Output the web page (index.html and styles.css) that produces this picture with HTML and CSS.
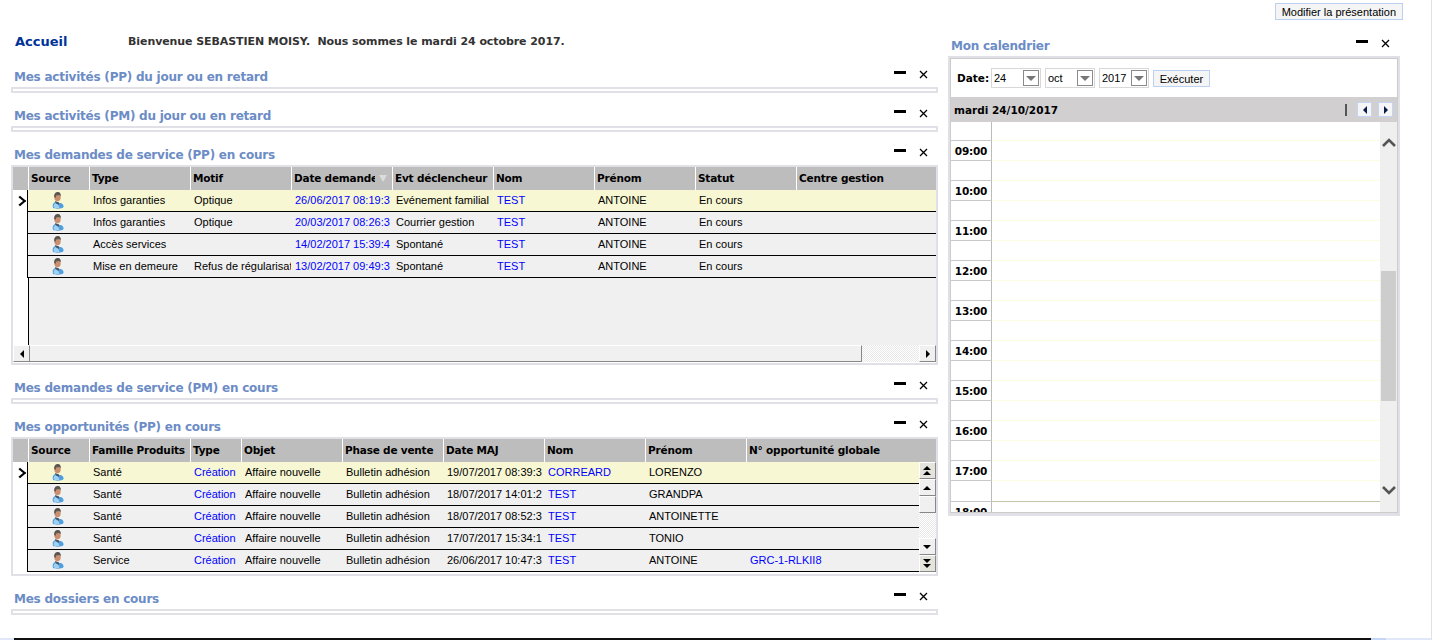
FILE: index.html
```html
<!DOCTYPE html>
<html lang="fr">

<head>
    <meta charset="UTF-8">
    <title>Accueil</title>
    <link rel="stylesheet" href="styles.css">
</head>

<body>
    <svg class="defs" width="0" height="0">
        <symbol id="person" viewBox="0 0 12 17">
            <path d="M1 16C0 13 1 11 3 10l5 1c2 0 4 2 3.500 4C11 17 3 17 1 16z" fill="#4d9fe0" />
            <path d="M1.500 15c0-2 .5-3 2-4l3 2 1 3H3z" fill="#9fd0f2" />
            <ellipse cx="5.500" cy="5" rx="3.200" ry="4.300" fill="#c98f6e" />
            <path d="M2.200 5C2 1 4 0 6 0s3 2 2.800 4L7 3l-3 .5L3.500 6z" fill="#5a5650" />
            <path d="M3 9l4 1.500V13l-3.500-2z" fill="#4a5560" />
        </symbol>
        <symbol id="close" viewBox="0 0 9 9">
            <path d="M1 1l7 7M8 1L1 8" stroke="#000" stroke-width="1.3" fill="none" />
        </symbol>
    </svg>

    <div class="page">
        <div class="topbar">
            <button class="btn">Modifier la présentation</button>
        </div>

        <div class="columns">
            <div class="main">
                <div class="welcome">
                    <span class="page-title">Accueil</span>
                    <span class="welcome-text">Bienvenue SEBASTIEN MOISY.&nbsp; Nous sommes le mardi 24 octobre 2017.</span>
                </div>

                <div class="portlet">
                    <div class="portlet-head">
                        <span class="portlet-title">Mes activités (PP) du jour ou en retard</span>
                        <span class="tool-min"></span>
                        <svg class="tool-close"><use href="#close" /></svg>
                    </div>
                    <div class="frame frame-empty"></div>
                </div>

                <div class="portlet">
                    <div class="portlet-head">
                        <span class="portlet-title">Mes activités (PM) du jour ou en retard</span>
                        <span class="tool-min"></span>
                        <svg class="tool-close"><use href="#close" /></svg>
                    </div>
                    <div class="frame frame-empty"></div>
                </div>

                <div class="portlet">
                    <div class="portlet-head">
                        <span class="portlet-title">Mes demandes de service (PP) en cours</span>
                        <span class="tool-min"></span>
                        <svg class="tool-close"><use href="#close" /></svg>
                    </div>
                    <div class="frame frame-grid frame-service">
                        <table class="grid">
                            <colgroup>
                                <col class="col-mark">
                                <col class="col-source">
                                <col class="col-std">
                                <col class="col-std">
                                <col class="col-std">
                                <col class="col-std">
                                <col class="col-std">
                                <col class="col-std">
                                <col class="col-std">
                                <col>
                            </colgroup>
                            <tr>
                                <th class="mark"></th>
                                <th>Source</th>
                                <th>Type</th>
                                <th>Motif</th>
                                <th class="sorted"><span class="sorted-text">Date demande</span><span class="sort-arrow"></span></th>
                                <th>Evt déclencheur</th>
                                <th>Nom</th>
                                <th>Prénom</th>
                                <th>Statut</th>
                                <th>Centre gestion</th>
                            </tr>
                            <tr class="selected">
                                <td class="mark"><span class="row-arrow"></span></td>
                                <td class="source"><svg class="person"><use href="#person" /></svg></td>
                                <td>Infos garanties</td>
                                <td>Optique</td>
                                <td class="link">26/06/2017 08:19:3</td>
                                <td>Evénement familial</td>
                                <td class="link">TEST</td>
                                <td>ANTOINE</td>
                                <td>En cours</td>
                                <td></td>
                            </tr>
                            <tr>
                                <td class="mark"></td>
                                <td class="source"><svg class="person"><use href="#person" /></svg></td>
                                <td>Infos garanties</td>
                                <td>Optique</td>
                                <td class="link">20/03/2017 08:26:3</td>
                                <td>Courrier gestion</td>
                                <td class="link">TEST</td>
                                <td>ANTOINE</td>
                                <td>En cours</td>
                                <td></td>
                            </tr>
                            <tr>
                                <td class="mark"></td>
                                <td class="source"><svg class="person"><use href="#person" /></svg></td>
                                <td>Accès services</td>
                                <td></td>
                                <td class="link">14/02/2017 15:39:4</td>
                                <td>Spontané</td>
                                <td class="link">TEST</td>
                                <td>ANTOINE</td>
                                <td>En cours</td>
                                <td></td>
                            </tr>
                            <tr>
                                <td class="mark"></td>
                                <td class="source"><svg class="person"><use href="#person" /></svg></td>
                                <td>Mise en demeure</td>
                                <td>Refus de régularisat</td>
                                <td class="link">13/02/2017 09:49:3</td>
                                <td>Spontané</td>
                                <td class="link">TEST</td>
                                <td>ANTOINE</td>
                                <td>En cours</td>
                                <td></td>
                            </tr>
                        </table>
                        <div class="grid-filler"></div>
                        <div class="hscroll">
                            <span class="sb-btn"><span class="arrow arrow-left"></span></span>
                            <span class="hscroll-thumb"></span>
                            <span class="dither"></span>
                            <span class="sb-btn"><span class="arrow arrow-right"></span></span>
                        </div>
                    </div>
                </div>

                <div class="portlet">
                    <div class="portlet-head">
                        <span class="portlet-title">Mes demandes de service (PM) en cours</span>
                        <span class="tool-min"></span>
                        <svg class="tool-close"><use href="#close" /></svg>
                    </div>
                    <div class="frame frame-empty"></div>
                </div>

                <div class="portlet">
                    <div class="portlet-head">
                        <span class="portlet-title">Mes opportunités (PP) en cours</span>
                        <span class="tool-min"></span>
                        <svg class="tool-close"><use href="#close" /></svg>
                    </div>
                    <div class="frame frame-grid frame-opp">
                        <table class="grid">
                            <colgroup>
                                <col class="col-mark">
                                <col class="col-source">
                                <col class="col-std">
                                <col class="col-small">
                                <col class="col-std">
                                <col class="col-std">
                                <col class="col-std">
                                <col class="col-std">
                                <col class="col-std">
                                <col>
                                <col class="col-vscroll">
                            </colgroup>
                            <tr>
                                <th class="mark"></th>
                                <th>Source</th>
                                <th>Famille Produits</th>
                                <th>Type</th>
                                <th>Objet</th>
                                <th>Phase de vente</th>
                                <th>Date MAJ</th>
                                <th>Nom</th>
                                <th>Prénom</th>
                                <th colspan="2">N° opportunité globale</th>
                            </tr>
                            <tr class="selected">
                                <td class="mark"><span class="row-arrow"></span></td>
                                <td class="source"><svg class="person"><use href="#person" /></svg></td>
                                <td>Santé</td>
                                <td class="link">Création</td>
                                <td>Affaire nouvelle</td>
                                <td>Bulletin adhésion</td>
                                <td>19/07/2017 08:39:3</td>
                                <td class="link">CORREARD</td>
                                <td>LORENZO</td>
                                <td></td>
                                <td class="vscroll-cell" rowspan="5">
                                    <div class="vscroll">
                                        <span class="sb-btn sb-double"><span class="arrow arrow-first"></span></span>
                                        <span class="sb-btn"><span class="arrow arrow-up"></span></span>
                                        <span class="sb-btn"></span>
                                        <span class="dither"></span>
                                        <span class="sb-btn"><span class="arrow arrow-down"></span></span>
                                        <span class="sb-btn sb-double"><span class="arrow arrow-last"></span></span>
                                    </div>
                                </td>
                            </tr>
                            <tr>
                                <td class="mark"></td>
                                <td class="source"><svg class="person"><use href="#person" /></svg></td>
                                <td>Santé</td>
                                <td class="link">Création</td>
                                <td>Affaire nouvelle</td>
                                <td>Bulletin adhésion</td>
                                <td>18/07/2017 14:01:2</td>
                                <td class="link">TEST</td>
                                <td>GRANDPA</td>
                                <td></td>
                            </tr>
                            <tr>
                                <td class="mark"></td>
                                <td class="source"><svg class="person"><use href="#person" /></svg></td>
                                <td>Santé</td>
                                <td class="link">Création</td>
                                <td>Affaire nouvelle</td>
                                <td>Bulletin adhésion</td>
                                <td>18/07/2017 08:52:3</td>
                                <td class="link">TEST</td>
                                <td>ANTOINETTE</td>
                                <td></td>
                            </tr>
                            <tr>
                                <td class="mark"></td>
                                <td class="source"><svg class="person"><use href="#person" /></svg></td>
                                <td>Santé</td>
                                <td class="link">Création</td>
                                <td>Affaire nouvelle</td>
                                <td>Bulletin adhésion</td>
                                <td>17/07/2017 15:34:1</td>
                                <td class="link">TEST</td>
                                <td>TONIO</td>
                                <td></td>
                            </tr>
                            <tr>
                                <td class="mark"></td>
                                <td class="source"><svg class="person"><use href="#person" /></svg></td>
                                <td>Service</td>
                                <td class="link">Création</td>
                                <td>Affaire nouvelle</td>
                                <td>Bulletin adhésion</td>
                                <td>26/06/2017 10:47:3</td>
                                <td class="link">TEST</td>
                                <td>ANTOINE</td>
                                <td class="link">GRC-1-RLKII8</td>
                            </tr>
                        </table>
                    </div>
                </div>

                <div class="portlet">
                    <div class="portlet-head">
                        <span class="portlet-title">Mes dossiers en cours</span>
                        <span class="tool-min"></span>
                        <svg class="tool-close"><use href="#close" /></svg>
                    </div>
                    <div class="frame frame-empty"></div>
                </div>
            </div>

            <div class="side">
                <div class="portlet-head side-head">
                    <span class="portlet-title">Mon calendrier</span>
                    <span class="tool-min"></span>
                    <svg class="tool-close"><use href="#close" /></svg>
                </div>
                <div class="cal-frame">
                    <div class="cal-inner">
                        <div class="cal-form">
                            <span class="cal-label">Date:</span>
                            <div class="combo"><span>24</span><span class="combo-btn"></span></div>
                            <div class="combo"><span>oct</span><span class="combo-btn"></span></div>
                            <div class="combo"><span>2017</span><span class="combo-btn"></span></div>
                            <button class="btn btn-run">Exécuter</button>
                        </div>
                        <div class="cal-bar">
                            <span class="cal-day">mardi 24/10/2017</span>
                            <span class="cal-sep"></span>
                            <span class="cal-nav"><span class="arrow arrow-left"></span></span>
                            <span class="cal-nav"><span class="arrow arrow-right"></span></span>
                        </div>
                        <div class="cal-body">
                            <div class="cal-slots">
                                <div class="slot slot-first"><span class="slot-time"></span><span class="slot-main"></span></div>
                                <div class="slot"><span class="slot-time">09:00</span><span class="slot-main"></span></div>
                                <div class="slot"><span class="slot-time"></span><span class="slot-main"></span></div>
                                <div class="slot"><span class="slot-time">10:00</span><span class="slot-main"></span></div>
                                <div class="slot"><span class="slot-time"></span><span class="slot-main"></span></div>
                                <div class="slot"><span class="slot-time">11:00</span><span class="slot-main"></span></div>
                                <div class="slot"><span class="slot-time"></span><span class="slot-main"></span></div>
                                <div class="slot"><span class="slot-time">12:00</span><span class="slot-main"></span></div>
                                <div class="slot"><span class="slot-time"></span><span class="slot-main"></span></div>
                                <div class="slot"><span class="slot-time">13:00</span><span class="slot-main"></span></div>
                                <div class="slot"><span class="slot-time"></span><span class="slot-main"></span></div>
                                <div class="slot"><span class="slot-time">14:00</span><span class="slot-main"></span></div>
                                <div class="slot"><span class="slot-time"></span><span class="slot-main"></span></div>
                                <div class="slot"><span class="slot-time">15:00</span><span class="slot-main"></span></div>
                                <div class="slot"><span class="slot-time"></span><span class="slot-main"></span></div>
                                <div class="slot"><span class="slot-time">16:00</span><span class="slot-main"></span></div>
                                <div class="slot"><span class="slot-time"></span><span class="slot-main"></span></div>
                                <div class="slot"><span class="slot-time">17:00</span><span class="slot-main"></span></div>
                                <div class="slot slot-end"><span class="slot-time"></span><span class="slot-main"></span></div>
                                <div class="slot"><span class="slot-time">18:00</span><span class="slot-main"></span></div>
                            </div>
                            <div class="cal-scroll">
                                <svg class="chevron chevron-up" viewBox="0 0 14 9"><path d="M1 8l6-6 6 6" /></svg>
                                <span class="cal-thumb"></span>
                                <svg class="chevron chevron-down" viewBox="0 0 14 9"><path d="M1 1l6 6 6-6" /></svg>
                            </div>
                        </div>
                    </div>
                </div>
            </div>
        </div>

        <div class="footer">
            <span class="footer-left"></span>
            <span class="footer-line"></span>
            <span class="footer-tab"></span>
            <span class="footer-right"></span>
        </div>
    </div>
</body>

</html>
```

FILE: styles.css
```css
body {
    margin: 0;
    background-color: #fff;
    font-family: "Liberation Sans", Arial, sans-serif;
    font-size: 11px;
    color: #000;
}

.defs {
    position: absolute;
}

.page {
    width: 1431px;
    height: 640px;
    border-right: 1px solid #e0e0e6;
    display: flex;
    flex-direction: column;
    overflow: hidden;
}

.topbar {
    height: 28px;
    box-sizing: border-box;
    padding: 3px 28px 0 0;
    display: flex;
    justify-content: flex-end;
    align-items: flex-start;
}

.btn {
    height: 17px;
    padding: 0 6px;
    border: 1px solid #bcd0f2;
    background-color: #f5f5f5;
    font-family: inherit;
    font-size: 11px;
    line-height: 14px;
    color: #000;
}

.columns {
    display: flex;
    flex: 1;
    padding-left: 11px;
}

.main {
    width: 927px;
}

.side {
    width: 452px;
    margin-left: 10px;
    padding-top: 6px;
}

.welcome {
    height: 26px;
    margin-bottom: 11px;
    display: flex;
    align-items: center;
    padding-left: 4px;
}

.page-title {
    width: 113px;
    font-family: "DejaVu Sans", sans-serif;
    font-size: 13px;
    font-weight: bold;
    color: #003399;
}

.welcome-text {
    font-family: "DejaVu Sans", sans-serif;
    font-size: 11px;
    font-weight: bold;
    letter-spacing: -0.08px;
    color: #333;
}

.portlet {
    margin-bottom: 11px;
}

.portlet-head {
    height: 22px;
    box-sizing: border-box;
    display: flex;
    align-items: center;
    padding: 2px 10px 0 3px;
}

.portlet-title {
    font-family: "DejaVu Sans", sans-serif;
    font-size: 12px;
    font-weight: bold;
    letter-spacing: -0.23px;
    color: #6c8cc6;
    flex: 1;
}

.tool-min {
    width: 12px;
    height: 3px;
    background-color: #000;
    margin: 0 13px 9px 0;
}

.tool-close {
    width: 9px;
    height: 9px;
    margin-top: -6px;
}

.side-head .tool-min {
    margin-bottom: 10px;
}

.frame {
    border: 2px solid #e0e0e6;
    box-sizing: border-box;
}

.frame-empty {
    height: 6px;
}

.frame-grid {
    display: flex;
    flex-direction: column;
}

.frame-service {
    height: 200px;
}

.frame-opp {
    height: 139px;
}

/* grids */
.grid {
    table-layout: fixed;
    width: 923px;
    border-collapse: separate;
    border-spacing: 0;
}

.col-mark {
    width: 15px;
}

.col-source {
    width: 61px;
}

.col-std {
    width: 101px;
}

.col-small {
    width: 51px;
}

.col-vscroll {
    width: 17px;
}

.grid th {
    height: 23px;
    box-sizing: border-box;
    padding: 0 0 2px 2px;
    border-left: 1px solid #fff;
    background-color: #bdbdbd;
    font-family: "DejaVu Sans", sans-serif;
    font-size: 10.5px;
    font-weight: bold;
    letter-spacing: -0.2px;
    text-align: left;
    white-space: nowrap;
    overflow: hidden;
}

.grid th.mark {
    border-left: none;
}

.grid th.sorted {
    position: relative;
}

.sorted-text {
    display: block;
    width: 81px;
    overflow: hidden;
}

.sort-arrow {
    position: absolute;
    right: 5px;
    top: 8px;
    width: 0;
    height: 0;
    border-left: 4px solid transparent;
    border-right: 4px solid transparent;
    border-top: 7px solid #dcdcdc;
}

.grid td {
    height: 22px;
    box-sizing: border-box;
    padding: 0 0 1px 4px;
    border-bottom: 1px solid #000;
    background-color: #f0f0f0;
    white-space: nowrap;
    overflow: hidden;
}

.grid .selected td {
    background-color: #f7f7d3;
}

.grid td.mark,
.grid .selected td.mark {
    padding: 0 0 0 4px;
    background-color: #fff;
    border-bottom: none;
    border-right: 1px solid #000;
    vertical-align: middle;
}

.grid td.link {
    color: #0000ff;
}

.grid td.source {
    padding: 0 2px 0 0;
    text-align: center;
}

.person {
    display: block;
    width: 12px;
    height: 17px;
    margin: 0 auto;
}

.row-arrow {
    display: block;
    width: 6px;
    height: 6px;
    border-top: 2px solid #000;
    border-right: 2px solid #000;
    transform: translateX(-1px) rotate(45deg) skew(-5deg, -5deg);
}

.grid-filler {
    flex: 1;
    margin-left: 15px;
    border-left: 1px solid #000;
    background-color: #f0f0f0;
}

/* scrollbars */
.hscroll {
    display: flex;
    height: 17px;
    margin-bottom: 1px;
    background-color: #fff;
}

.sb-btn {
    display: flex;
    flex: none;
    align-items: center;
    justify-content: center;
    box-sizing: border-box;
    width: 17px;
    height: 17px;
    background-color: #f0f0f0;
    border-top: 1px solid #fff;
    border-left: 1px solid #fff;
    border-right: 1px solid #888;
    border-bottom: 1px solid #888;
}

.sb-double {
    background-color: #e4e4dc;
}

.hscroll-thumb {
    width: 832px;
    background-color: #f0f0f0;
    border-right: 1px solid #888;
    border-bottom: 1px solid #888;
    border-top: 1px solid #fff;
    box-sizing: border-box;
}

.dither {
    flex: 1;
    background-image: repeating-conic-gradient(#e8e8e8 0 25%, #fff 0 50%);
    background-size: 2px 2px;
}

.grid td.vscroll-cell {
    padding: 0;
    border-bottom: none;
    background-color: #fff;
    vertical-align: top;
}

.vscroll {
    display: flex;
    flex-direction: column;
    height: 110px;
}

.arrow {
    display: block;
    width: 0;
    height: 0;
}

.arrow-left {
    border-top: 4px solid transparent;
    border-bottom: 4px solid transparent;
    border-right: 4px solid #000;
}

.arrow-right {
    border-top: 4px solid transparent;
    border-bottom: 4px solid transparent;
    border-left: 4px solid #000;
}

.arrow-up {
    border-left: 4px solid transparent;
    border-right: 4px solid transparent;
    border-bottom: 4px solid #000;
}

.arrow-down {
    border-left: 4px solid transparent;
    border-right: 4px solid transparent;
    border-top: 4px solid #000;
}

.arrow-first,
.arrow-last {
    position: relative;
    border-left: 4px solid transparent;
    border-right: 4px solid transparent;
}

.arrow-first {
    border-bottom: 4px solid #000;
    margin-top: -5px;
}

.arrow-first::after {
    content: "";
    position: absolute;
    left: -4px;
    top: 5px;
    border-left: 4px solid transparent;
    border-right: 4px solid transparent;
    border-bottom: 4px solid #000;
}

.arrow-last {
    border-top: 4px solid #000;
    margin-bottom: -5px;
}

.arrow-last::before {
    content: "";
    position: absolute;
    left: -4px;
    top: -9px;
    border-left: 4px solid transparent;
    border-right: 4px solid transparent;
    border-top: 4px solid #000;
}

/* calendar */
.cal-frame {
    height: 460px;
    box-sizing: border-box;
    border: solid #e0e0e6;
    border-width: 2px 2px 3px 2px;
}

.cal-inner {
    height: 100%;
    box-sizing: border-box;
    border: 1px solid #cccccc;
    display: flex;
    flex-direction: column;
}

.cal-form {
    height: 38px;
    flex: none;
    display: flex;
    align-items: center;
    gap: 4px;
    padding-left: 6px;
}

.cal-label {
    width: 30px;
    font-family: "DejaVu Sans", sans-serif;
    font-size: 10.5px;
    font-weight: bold;
}

.combo {
    width: 50px;
    height: 20px;
    box-sizing: border-box;
    border: 1px solid #d8d8d8;
    display: flex;
    align-items: center;
    justify-content: space-between;
    padding: 0 1px 0 2px;
}

.combo-btn {
    width: 16px;
    height: 16px;
    box-sizing: border-box;
    border: 1px solid #8a8a8a;
    display: flex;
    align-items: center;
    justify-content: center;
}

.combo-btn::after {
    content: "";
    border-left: 5px solid transparent;
    border-right: 5px solid transparent;
    border-top: 5px solid #777;
}

.btn-run {
    width: 57px;
    padding: 0;
    margin-top: 1px;
}

.cal-bar {
    height: 25px;
    flex: none;
    background-color: #d1cfd0;
    display: flex;
    align-items: center;
    padding: 0 4px 0 3px;
}

.cal-day {
    flex: 1;
    font-family: "DejaVu Sans", sans-serif;
    font-size: 10.5px;
    font-weight: bold;
}

.cal-sep {
    width: 2px;
    height: 12px;
    background-color: #555;
    margin-right: 4px;
}

.cal-nav {
    width: 15px;
    height: 15px;
    box-sizing: border-box;
    border: 1px solid #c4d4f4;
    background-color: #f5f5f5;
    display: flex;
    align-items: center;
    justify-content: center;
    margin-left: 6px;
}

.cal-nav .arrow-left {
    border-right-color: #0a1a4a;
}

.cal-nav .arrow-right {
    border-left-color: #0a1a4a;
}

.cal-body {
    flex: 1;
    min-height: 0;
    display: flex;
    overflow: hidden;
}

.cal-slots {
    flex: 1;
}

.slot {
    height: 20px;
    display: flex;
}

.slot-first {
    height: 19px;
}

.slot-end {
    height: 21px;
}

.slot-time {
    width: 40px;
    border-right: 1px solid #bbb;
    border-bottom: 1px solid #c8c8c8;
    font-family: "DejaVu Sans", sans-serif;
    font-size: 10.5px;
    font-weight: bold;
    letter-spacing: -0.2px;
    line-height: 20px;
    text-align: center;
}

.slot-main {
    flex: 1;
    border-bottom: 1px solid #fdfde4;
}

.slot-end .slot-main {
    border-bottom-color: #c4c4a8;
}

.cal-scroll {
    width: 17px;
    flex: none;
    background-color: #efefef;
    display: flex;
    flex-direction: column;
    align-items: center;
}

.chevron {
    width: 14px;
    height: 9px;
    flex: none;
    fill: none;
    stroke: #555;
    stroke-width: 2.6;
}

.chevron-up {
    margin-top: 16px;
}

.cal-thumb {
    width: 15px;
    height: 130px;
    flex: none;
    background-color: #cdcdcd;
    margin-top: 124px;
}

.chevron-down {
    margin-top: 85px;
}

.footer {
    height: 2px;
    flex: none;
    display: flex;
}

.footer-left {
    width: 14px;
    background-color: #dfe7f8;
}

.footer-line {
    width: 1357px;
    background-color: #111;
}

.footer-tab {
    width: 15px;
    background-color: #c6d6f6;
}

.footer-right {
    flex: 1;
    background-color: #dfe7f8;
}
```
